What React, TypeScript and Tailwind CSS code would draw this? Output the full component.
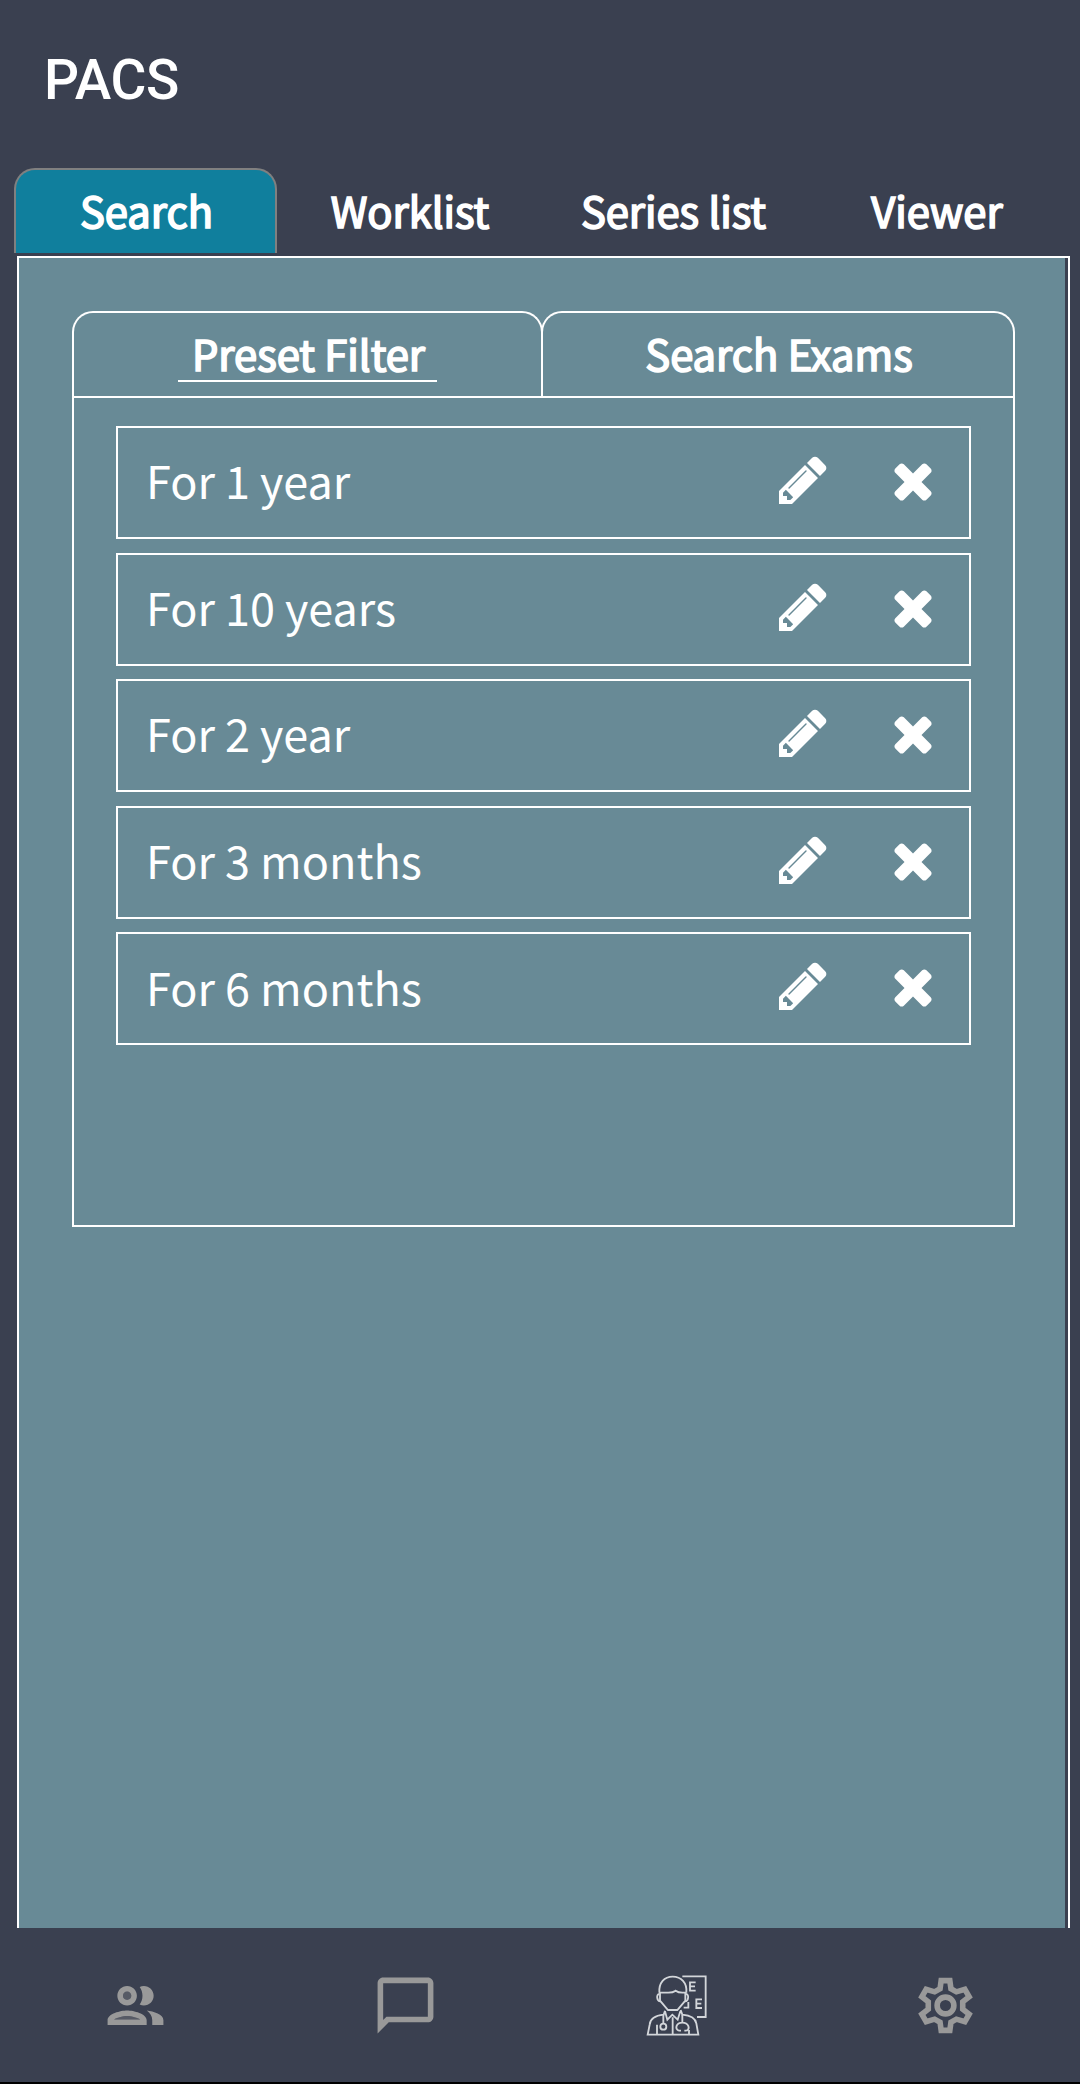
import React from "react";

const mainTabs = ["Search", "Worklist", "Series list", "Viewer"];
const presets = ["For 1 year", "For 10 years", "For 2 year", "For 3 months", "For 6 months"];

function Pencil() {
  return (
    <svg viewBox="0 0 1792 1792" className="size-14 fill-white">
      <path d="M491 1536l91-91-235-235-91 91v107h128v128h107zm523-928q0-22-22-22-10 0-17 7l-542 542q-7 7-7 17 0 22 22 22 10 0 17-7l542-542q7-7 7-17zm-54-192l416 416-832 832h-416v-416zm683 96q0 53-37 90l-166 166-416-416 166-165q36-38 90-38 53 0 91 38l235 234q37 39 37 91z" />
    </svg>
  );
}

function Times() {
  return (
    <svg viewBox="0 0 1792 1792" className="size-14 fill-white">
      <path d="M1490 1322q0 40-28 68l-136 136q-28 28-68 28t-68-28l-294-294-294 294q-28 28-68 28t-68-28l-136-136q-28-28-28-68t28-68l294-294-294-294q-28-28-28-68t28-68l136-136q28-28 68-28t68 28l294 294 294-294q28-28 68-28t68 28l136 136q28 28 28 68t-28 68l-294 294 294 294q28 28 28 68z" />
    </svg>
  );
}

function People() {
  return (
    <svg viewBox="0 0 24 24" className="size-[67px] fill-[#999999]">
      <circle cx="9" cy="8.5" r="1.5" opacity=".3" />
      <path opacity=".3" d="M4.34 17h9.32c-.84-.58-2.87-1.25-4.66-1.25s-3.82.67-4.66 1.25z" />
      <path d="M9 13.75c-2.34 0-7 1.17-7 3.5V19h14v-1.75c0-2.33-4.66-3.5-7-3.5zM4.34 17c.84-.58 2.87-1.25 4.66-1.25s3.82.67 4.66 1.25H4.34zM9 12c1.93 0 3.5-1.57 3.5-3.5S10.93 5 9 5 5.5 6.57 5.5 8.5 7.07 12 9 12zm0-5c.83 0 1.5.67 1.5 1.5S9.83 10 9 10s-1.5-.67-1.5-1.5S8.17 7 9 7zm7.04 6.81c1.16.84 1.96 1.96 1.96 3.44V19h4v-1.75c0-2.02-3.5-3.17-5.96-3.44zM15 12c1.93 0 3.5-1.57 3.5-3.5S16.93 5 15 5c-.54 0-1.04.13-1.5.35.63.89 1 1.98 1 3.15s-.37 2.26-1 3.15c.46.22.96.35 1.5.35z" />
    </svg>
  );
}

function Chat() {
  return (
    <svg viewBox="0 0 24 24" className="size-[67px] fill-[#999999]">
      <path d="M20 2H4c-1.1 0-2 .9-2 2v18l4-4h14c1.1 0 2-.9 2-2V4c0-1.1-.9-2-2-2zm0 14H5.17L4 17.17V4h16v12z" />
    </svg>
  );
}

function Doctor() {
  return (
    <svg viewBox="75 75 183 183" className="ml-0.5 size-[61px] fill-none stroke-[#d3d6da]" strokeWidth="5.5">
      {/* head, cap and ears */}
      <path d="M115 128C113 98 130 80 155 80s44 18 41 48M114 128h28q14 0 22-6 8 6 20 6h12M117 128v24l24 28h28l24-28v-24" />
      <path d="M115 132c-10 0-8 22 3 22M195 132c10 0 8 22-3 22" />
      {/* eye chart */}
      <path d="M184 79h70v122h-26M224 97h-17v25h17M207 109h15M243 148h-17v26h17M226 161h15M202 156v17h-14" />
      {/* coat */}
      <path d="M132 182l-4 12q-40 4-42 30l-6 30h152l-6-34q-4-22-42-26l-5-14M132 184l7 25 15-15 16 15 8-25M155 202v50M108 252v-28M204 252v-12" />
      {/* stethoscope */}
      <path d="M127 194v26M184 194v24M173 242c-12-6-8-24 11-24s24 18 13 24M173 242h7M197 242h-7" />
      <circle cx="127" cy="230" r="9" />
    </svg>
  );
}

function Gear() {
  return (
    <svg viewBox="-12 -12 24 24" className="size-[67px] fill-none stroke-[#999999]" strokeWidth="2">
      <path d="M-1.55-8.9L1.55-8.9L1.95-6L3.9-4.9L6.93-5.79L8.48-3.11L6.17-1.31L6.17 1.31L8.48 3.11L6.93 5.79L3.9 4.9L1.95 6L1.55 8.9L-1.55 8.9L-1.95 6L-3.9 4.9L-6.93 5.79L-8.48 3.11L-6.17 1.31L-6.17-1.31L-8.48-3.11L-6.93-5.79L-3.9-4.9L-1.95-6Z" />
      <circle r="3" />
    </svg>
  );
}

export default function App() {
  return (
    <div className="flex h-[2084px] w-[1080px] flex-col bg-[#3a4050] font-['Noto_Sans_CJK_KR','Noto_Sans',sans-serif] text-white">
      <header className="flex h-[168px] shrink-0 items-center pb-2 pl-11 font-['Roboto',sans-serif] text-[55px] font-medium tracking-[-0.3px]">
        <h1>PACS</h1>
      </header>
      <nav className="ml-3.5 flex h-[85px] shrink-0 gap-[0.5px]">
        {mainTabs.map((t, i) => (
          <button
            key={t}
            className={
              "flex w-[263px] items-center justify-center whitespace-nowrap pl-[2px] text-[41.7px] leading-[42px] [-webkit-text-stroke:1.7px_white] " +
              (i === 0 ? "rounded-t-[21px] border-2 border-b-0 border-[#808080] bg-[#107f9d] pb-[3px]" : "pb-px")
            }
          >
            {t}
          </button>
        ))}
      </nav>
      <main className="mr-2.5 ml-[17px] mt-[3px] flex h-[1672px] shrink-0 flex-col border-2 border-b-0 border-white pr-[3px]">
        <div className="h-full bg-[#688a96] pl-[53px] pt-[53px]">
          <div className="flex h-[85px] w-[943px] text-[41.7px] leading-[42px] [-webkit-text-stroke:1.7px_white]">
            <button className="flex w-[471px] items-start justify-center rounded-t-[21px] border-2 border-b-0 pt-[11px]">
              <span className="flex h-[58px] w-[259px] items-center justify-center whitespace-nowrap border-b-2 pl-[2px] pt-px">Preset Filter</span>
            </button>
            <button className="-ml-0.5 flex w-[474px] items-start justify-center rounded-t-[21px] border-2 border-b-0 pl-[2px] pt-[11px]">
              <span className="flex h-14 items-center pt-px">Search Exams</span>
            </button>
          </div>
          <div className="flex h-[831px] w-[943px] flex-col gap-[13.6px] border-2 px-[42px] pt-7">
            {presets.map((p) => (
              <div key={p} className="flex h-[113px] shrink-0 items-center border-2 pb-[5px] pl-7 text-[45px]">
                <span className="flex-1">{p}</span>
                <Pencil />
                <span className="ml-[54.5px] mr-[28px]">
                  <Times />
                </span>
              </div>
            ))}
          </div>
        </div>
      </main>
      <footer className="grid h-[156px] shrink-0 grid-cols-4 place-items-center border-b-2 border-black">
        <People />
        <Chat />
        <Doctor />
        <Gear />
      </footer>
    </div>
  );
}
